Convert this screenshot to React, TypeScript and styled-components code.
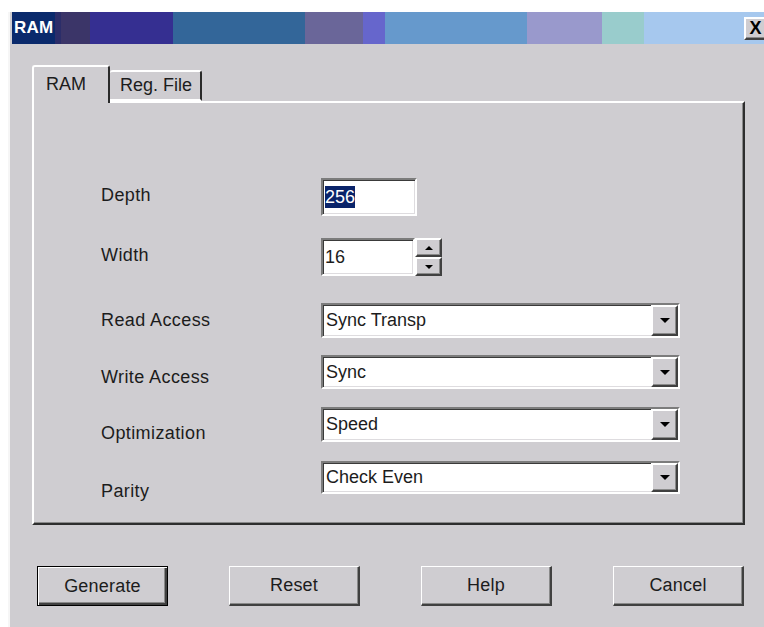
import React from "react";
import styled, { createGlobalStyle, css } from "styled-components";

const GlobalStyle = createGlobalStyle`
  html, body {
    margin: 0;
    padding: 0;
    background: #ffffff;
  }
  body {
    font-family: "Liberation Sans", Arial, sans-serif;
    color: #1c1c1c;
  }
`;

const FACE = "#cfcdd1";

const raised = css`
  border-style: solid;
  border-width: 2px;
  border-color: #ffffff #404040 #404040 #ffffff;
  box-shadow: inset -1px -1px 0 #8a8a8a;
`;

const sunken = css`
  border-style: solid;
  border-width: 2px;
  border-color: #7c7c7c #ffffff #ffffff #7c7c7c;
  box-shadow: inset 1px 1px 0 #3a3a3a, inset -1px -1px 0 #dedcdf;
`;

const Window = styled.div`
  margin: 12px 0 0 8px;
  height: 615px;
  background: ${FACE};
  border-left: 2px solid #f6f6f6;
  display: flex;
  flex-direction: column;
  overflow: hidden;
`;

const TitleBar = styled.div`
  height: 32px;
  margin-left: 2px;
  display: flex;
  align-items: center;
  justify-content: space-between;
  background: linear-gradient(
    to right,
    #0a2a6c 0 43px,
    #2b2d69 43px 49px,
    #3b3568 49px 78px,
    #352f91 78px 161px,
    #336699 161px 293px,
    #6a6699 293px 351px,
    #6666cc 351px 373px,
    #6699cc 373px 515px,
    #9999cc 515px 590px,
    #99cccc 590px 632px,
    #a6c8ee 632px
  );
`;

const Title = styled.span`
  color: #ffffff;
  font-weight: bold;
  font-size: 17px;
  padding-left: 2px;
  letter-spacing: 0.2px;
`;

const CloseButton = styled.div`
  ${raised};
  width: 19px;
  height: 19px;
  margin-right: -3px;
  background: ${FACE};
  display: flex;
  align-items: center;
  justify-content: center;
  font-size: 18px;
  font-weight: bold;
  line-height: 1;
  color: #000;
`;

const Body = styled.div`
  flex: 1;
  padding: 21px 0 0 22px;
  display: flex;
  flex-direction: column;
`;

const TabStrip = styled.div`
  display: flex;
  align-items: flex-end;
  height: 36px;
  position: relative;
  z-index: 1;
`;

const Tab = styled.div<{ $active?: boolean }>`
  background: ${FACE};
  border-top: 2px solid #ffffff;
  border-left: ${(p) => (p.$active ? "2px solid #ffffff" : "none")};
  border-right: 2px solid #2a2a2a;
  border-radius: 3px 3px 0 0;
  font-size: 18px;
  display: flex;
  align-items: center;
  box-sizing: border-box;
  ${(p) =>
    p.$active
      ? css`
          width: 78px;
          height: 38px;
          margin-bottom: -2px;
          padding: 0 0 2px 12px;
        `
      : css`
          width: 92px;
          height: 31px;
          padding: 0 0 0 10px;
          border-bottom: 2px solid #ffffff;
        `}
`;

const Panel = styled.div`
  width: 713px;
  height: 424px;
  box-sizing: border-box;
  border-style: solid;
  border-width: 2px;
  border-color: #ffffff #2e2e2e #2e2e2e #ffffff;
  box-shadow: inset -1px -1px 0 #8a8a8a;
  display: flex;
`;

const LabelColumn = styled.div`
  width: 220px;
  padding-left: 67px;
  display: flex;
  flex-direction: column;
`;

const Label = styled.div<{ $gap: number }>`
  margin-top: ${(p) => p.$gap}px;
  height: 20px;
  line-height: 20px;
  font-size: 18px;
  letter-spacing: 0.4px;
  white-space: nowrap;
`;

const ControlColumn = styled.div`
  display: flex;
  flex-direction: column;
  padding-top: 75px;
`;

const Field = styled.div<{ $gap: number; $h: number; $w: number }>`
  ${sunken};
  box-sizing: border-box;
  margin-top: ${(p) => p.$gap}px;
  height: ${(p) => p.$h}px;
  width: ${(p) => p.$w}px;
  background: #ffffff;
  display: flex;
  align-items: center;
  justify-content: space-between;
  font-size: 18px;
  padding-left: 2px;
`;

const Selected = styled.span`
  background: #0a246a;
  color: #ffffff;
  padding: 1px 0 1px 0;
  line-height: 20px;
`;

const SpinRow = styled.div`
  display: flex;
  margin-top: 22px;
`;

const SpinButtons = styled.div`
  display: flex;
  flex-direction: column;
  height: 38px;
`;

const SmallButton = styled.div<{ $h: number }>`
  ${raised};
  box-sizing: border-box;
  width: 27px;
  height: ${(p) => p.$h}px;
  background: ${FACE};
  display: flex;
  align-items: center;
  justify-content: center;
`;

const ComboText = styled.span`
  padding-left: 1px;
`;

const Arrow = styled.span<{ $up?: boolean; $big?: boolean }>`
  width: 0;
  height: 0;
  border-left: ${(p) => (p.$big ? 5 : 4)}px solid transparent;
  border-right: ${(p) => (p.$big ? 5 : 4)}px solid transparent;
  ${(p) =>
    p.$up
      ? "border-bottom: 4px solid #000;"
      : `border-top: ${p.$big ? 5 : 4}px solid #000;`}
`;

const ButtonRow = styled.div`
  display: flex;
  gap: 61px;
  padding: 41px 0 0 5px;
`;

const Button = styled.div<{ $default?: boolean }>`
  box-sizing: border-box;
  width: 131px;
  height: 40px;
  background: ${FACE};
  display: flex;
  align-items: center;
  justify-content: center;
  font-size: 18px;
  letter-spacing: 0.2px;
  ${(p) =>
    p.$default
      ? css`
          border: 1px solid #000;
          box-shadow: inset 1px 1px 0 #ffffff, inset -2px -2px 0 #404040,
            inset -3px -3px 0 #8a8a8a;
        `
      : css`
          border-style: solid;
          border-width: 1px 2px 2px 1px;
          border-color: #ffffff #404040 #404040 #ffffff;
          box-shadow: inset -1px -1px 0 #8a8a8a;
        `}
`;

const labels = [
  { text: "Depth", gap: 82 },
  { text: "Width", gap: 40 },
  { text: "Read Access", gap: 45 },
  { text: "Write Access", gap: 37 },
  { text: "Optimization", gap: 36 },
  { text: "Parity", gap: 38 },
];

const combos = [
  { value: "Sync Transp", gap: 27, h: 35 },
  { value: "Sync", gap: 17, h: 34 },
  { value: "Speed", gap: 18, h: 35 },
  { value: "Check Even", gap: 19, h: 33 },
];

const App: React.FC = () => (
  <>
    <GlobalStyle />
    <Window>
      <TitleBar>
        <Title>RAM</Title>
        <CloseButton>X</CloseButton>
      </TitleBar>
      <Body>
        <TabStrip>
          <Tab $active>RAM</Tab>
          <Tab>Reg. File</Tab>
        </TabStrip>
        <Panel>
          <LabelColumn>
            {labels.map((l) => (
              <Label key={l.text} $gap={l.gap}>
                {l.text}
              </Label>
            ))}
          </LabelColumn>
          <ControlColumn>
            <Field $gap={0} $h={38} $w={96}>
              <Selected>256</Selected>
            </Field>
            <SpinRow>
              <Field $gap={0} $h={38} $w={94}>
                <span>16</span>
              </Field>
              <SpinButtons>
                <SmallButton $h={19}>
                  <Arrow $up />
                </SmallButton>
                <SmallButton $h={19}>
                  <Arrow />
                </SmallButton>
              </SpinButtons>
            </SpinRow>
            {combos.map((c) => (
              <Field key={c.value} $gap={c.gap} $h={c.h} $w={359}>
                <ComboText>{c.value}</ComboText>
                <SmallButton $h={c.h - 4}>
                  <Arrow $big />
                </SmallButton>
              </Field>
            ))}
          </ControlColumn>
        </Panel>
        <ButtonRow>
          <Button $default>Generate</Button>
          <Button>Reset</Button>
          <Button>Help</Button>
          <Button>Cancel</Button>
        </ButtonRow>
      </Body>
    </Window>
  </>
);

export default App;
